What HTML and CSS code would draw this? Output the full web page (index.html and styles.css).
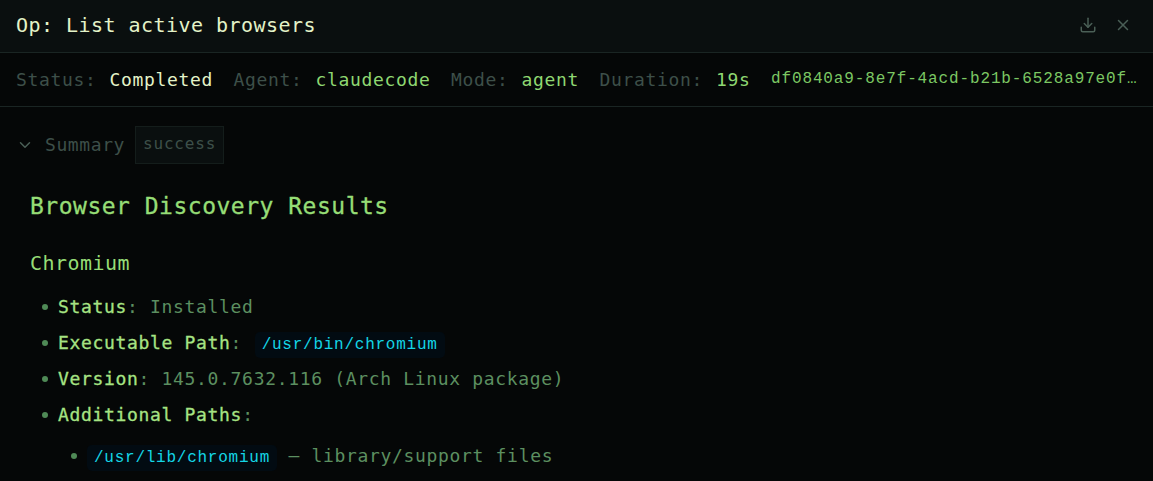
FILE: index.html
```html
<!DOCTYPE html>
<html lang="en">
<head>
    <meta charset="UTF-8">
    <meta name="viewport" content="width=device-width, initial-scale=1.0">
    <title>Op: List active browsers</title>
    <link rel="stylesheet" href="styles.css">
</head>
<body>
    <header class="title-bar">
        <h1>Op: List active browsers</h1>
        <div class="actions">
            <svg class="icon" viewBox="0 0 24 24"><path d="M21 15v4a2 2 0 0 1-2 2H5a2 2 0 0 1-2-2v-4"/><path d="M7 10l5 5 5-5"/><path d="M12 15V3"/></svg>
            <svg class="icon" viewBox="0 0 24 24"><path d="M18 6L6 18"/><path d="M6 6l12 12"/></svg>
        </div>
    </header>

    <div class="meta-bar">
        <span class="label">Status:</span><span class="val white">Completed</span>
        <span class="label">Agent:</span><span class="val">claudecode</span>
        <span class="label">Mode:</span><span class="val">agent</span>
        <span class="label">Duration:</span><span class="val">19s</span>
        <span class="run-id">df0840a9-8e7f-4acd-b21b-6528a97e0f12c4</span>
    </div>

    <main class="content">
        <div class="summary-head">
            <svg class="chevron" viewBox="0 0 24 24"><path d="M6 9l6 6 6-6"/></svg>
            <span class="summary-title">Summary</span>
            <span class="tag">success</span>
        </div>

        <div class="markdown">
            <h2>Browser Discovery Results</h2>
            <h3>Chromium</h3>
            <ul>
                <li><strong>Status</strong>: Installed</li>
                <li><strong>Executable Path</strong>: <code>/usr/bin/chromium</code></li>
                <li><strong>Version</strong>: 145.0.7632.116 (Arch Linux package)</li>
                <li><strong>Additional Paths</strong>:
                    <ul>
                        <li><code>/usr/lib/chromium</code> — library/support files</li>
                    </ul>
                </li>
            </ul>
        </div>
    </main>
</body>
</html>
```

FILE: styles.css
```css
* {
    margin: 0;
    padding: 0;
    box-sizing: border-box;
}

body {
    background: #050707;
    color: #5c8f60;
    font-family: 'DejaVu Sans Mono', 'Liberation Mono', monospace;
    height: 100vh;
    overflow: hidden;
}

.title-bar {
    display: flex;
    justify-content: space-between;
    align-items: center;
    height: 53px;
    padding: 0 21px 2px 16px;
    background: #0a0f0f;
    border-bottom: 1px solid #1a2523;
}

h1 {
    font-size: 20px;
    font-weight: 400;
    letter-spacing: 0.46px;
    color: #e4f3c8;
}

.actions {
    display: flex;
    gap: 17px;
}

.icon {
    width: 18px;
    height: 18px;
    fill: none;
    stroke: #4a5f56;
    stroke-width: 2;
    stroke-linecap: round;
    stroke-linejoin: round;
}

.meta-bar {
    display: flex;
    align-items: center;
    height: 54px;
    padding: 0 10px 1px 16px;
    font-size: 18px;
    letter-spacing: 0.67px;
    white-space: nowrap;
    border-bottom: 1px solid #1a2523;
}

.label {
    color: #3d4f49;
    margin-right: 13px;
}

.val {
    color: #8fd872;
    margin-right: 20.4px;
}

.val.white {
    color: #e4f3c8;
}

.run-id {
    font-family: 'Liberation Mono', monospace;
    font-size: 16px;
    letter-spacing: 0.87px;
    color: #7cc763;
    width: 369px;
    overflow: hidden;
    text-overflow: ellipsis;
}

.content {
    padding: 19px 16px 0;
}

.summary-head {
    display: flex;
    align-items: center;
    height: 38px;
}

.chevron {
    width: 18px;
    height: 18px;
    margin-right: 11px;
    fill: none;
    stroke: #4a5f56;
    stroke-width: 2;
    stroke-linecap: round;
    stroke-linejoin: round;
}

.summary-title {
    font-size: 18px;
    letter-spacing: 0.6px;
    color: #3d4f49;
    margin: -2px 10px 0 0;
}

.tag {
    height: 38px;
    line-height: 33px;
    padding: 0 7px;
    font-size: 16px;
    letter-spacing: 0.8px;
    color: #3d4f49;
    background: #0a0f0f;
    border: 1px solid #141d1b;
}

.markdown {
    padding: 0 14px;
}

h2 {
    margin-top: 27px;
    font-size: 23px;
    font-weight: 400;
    line-height: 30px;
    letter-spacing: 0.5px;
    color: #96dd76;
    -webkit-text-stroke: 0.3px #96dd76;
}

h3 {
    margin-top: 28px;
    font-size: 20px;
    font-weight: 400;
    line-height: 28px;
    letter-spacing: 0.46px;
    color: #96dd76;
}

ul {
    list-style: none;
    margin-top: 12px;
}

li {
    position: relative;
    margin-left: 28px;
    height: 36px;
    line-height: 36px;
    font-size: 18px;
    letter-spacing: 0.67px;
}

li::before {
    content: '';
    position: absolute;
    left: -16px;
    top: 15px;
    width: 6px;
    height: 6px;
    border-radius: 50%;
    background: #4f8a56;
}

li ul {
    margin-top: 5px;
}

li li {
    margin-left: 29px;
}

strong {
    font-weight: 400;
    color: #a6e383;
    -webkit-text-stroke: 0.3px #a6e383;
}

code {
    font-family: 'Liberation Mono', monospace;
    font-size: 16px;
    letter-spacing: 0.75px;
    color: #14d6e6;
    background: #020b12;
    border-radius: 5px;
    padding: 4px 7px;
    margin-left: 1px;
}

li li code {
    margin-left: 0;
}
```
